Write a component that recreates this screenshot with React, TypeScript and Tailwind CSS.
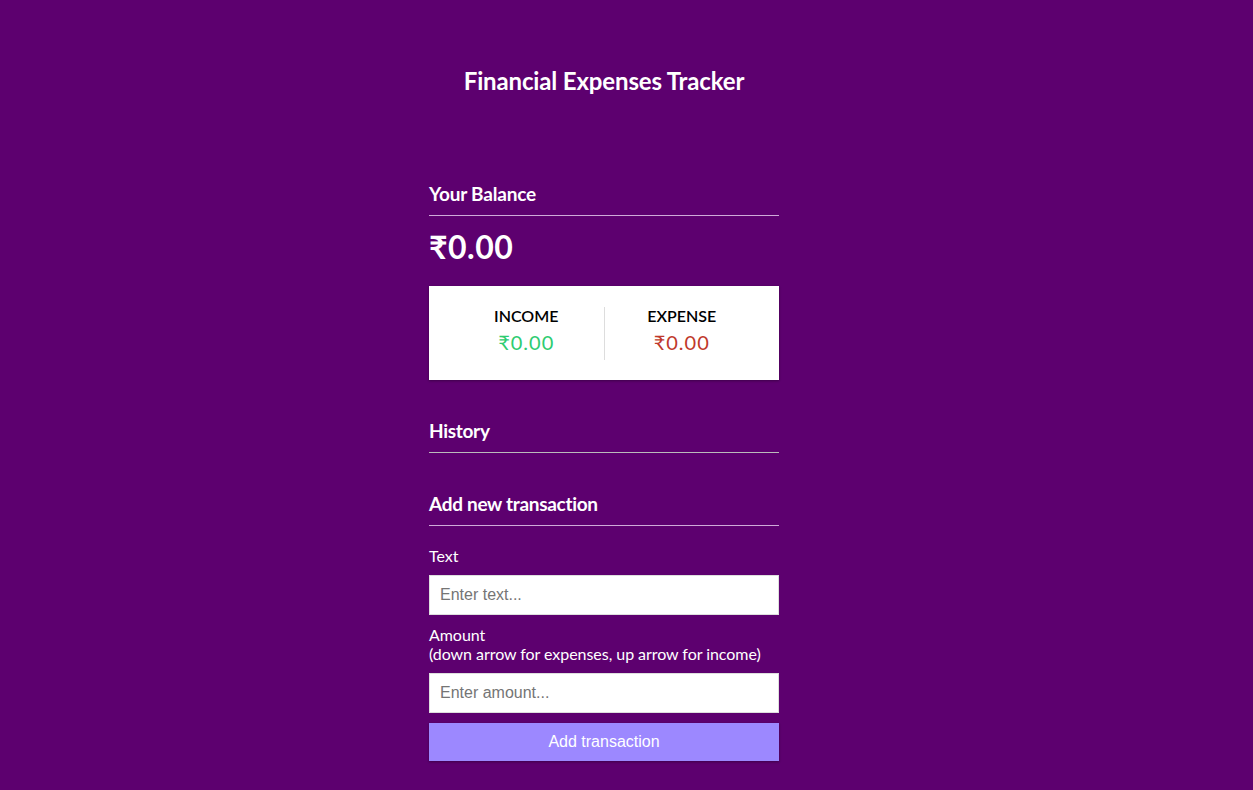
import { useState } from "react";

const lato = "font-['Lato',sans-serif]";

export default function App() {
  const [text, setText] = useState("");
  const [amount, setAmount] = useState("");

  return (
    <div className={`min-h-[790px] bg-[#5d006f] text-white ${lato}`}>
      <div className="w-[1208px] flex flex-col items-center">
        <h2 className="mt-[67px] text-[24px] leading-[28px] font-bold tracking-[-0.15px]">
          Financial Expenses Tracker
        </h2>

        <div className="w-[350px] mt-[87px]">
          <h4 className="text-[19px] leading-[24px] font-bold pb-[9px] border-b border-[#cfaad9] tracking-[-0.2px]">
            Your Balance
          </h4>
          <h1 className="mt-[11px] text-[32px] leading-[40px] font-bold tracking-[0.5px]">
            ₹0.00
          </h1>

          <div className="mt-[19px] h-[94px] bg-white text-black shadow-[0_1px_3px_rgba(0,0,0,0.12),0_1px_2px_rgba(0,0,0,0.24)] flex items-center px-[20px]">
            <div className="flex-1 h-[53px] flex flex-col items-center border-r border-[#dddddd]">
              <div className="text-[16px] leading-[18px] font-semibold uppercase">Income</div>
              <div className="text-[20px] leading-[24px] tracking-[1px] text-[#2ecc71] mt-[5px]">₹0.00</div>
            </div>
            <div className="flex-1 h-[53px] flex flex-col items-center">
              <div className="text-[16px] leading-[18px] font-semibold uppercase">Expense</div>
              <div className="text-[20px] leading-[24px] tracking-[1px] text-[#c0392b] mt-[5px]">₹0.00</div>
            </div>
          </div>

          <h3 className="mt-[39px] text-[19px] leading-[24px] font-bold pb-[9px] border-b border-[#bbbbbb] tracking-[-0.3px]">
            History
          </h3>

          <h3 className="mt-[39px] text-[19px] leading-[24px] font-bold pb-[9px] border-b border-[#cfaad9] tracking-[-0.3px]">
            Add new transaction
          </h3>

          <form onSubmit={(e) => e.preventDefault()}>
            <label className="block mt-[20px] text-[16px] leading-[20px]">Text</label>
            <input
              type="text"
              value={text}
              onChange={(e) => setText(e.target.value)}
              placeholder="Enter text..."
              className="block w-full mt-[9px] h-[40px] px-[10px] bg-white text-black border border-[#dedede] text-[16px] font-['Liberation_Sans',Arial,sans-serif] placeholder:text-[#757575] outline-none"
            />
            <label className="block mt-[10px] text-[16px] leading-[19px] tracking-[-0.05px]">
              Amount <br />
              (down arrow for expenses, up arrow for income)
            </label>
            <input
              type="number"
              value={amount}
              onChange={(e) => setAmount(e.target.value)}
              placeholder="Enter amount..."
              className="block w-full mt-[10px] h-[40px] px-[10px] bg-white text-black border border-[#dedede] text-[16px] font-['Liberation_Sans',Arial,sans-serif] placeholder:text-[#757575] outline-none"
            />
            <button className="block w-full mt-[10px] h-[38px] bg-[#9c88ff] text-white text-[16px] font-['Liberation_Sans',Arial,sans-serif] shadow-[0_1px_3px_rgba(0,0,0,0.12),0_1px_2px_rgba(0,0,0,0.24)]">
              Add transaction
            </button>
          </form>
        </div>
      </div>
    </div>
  );
}
